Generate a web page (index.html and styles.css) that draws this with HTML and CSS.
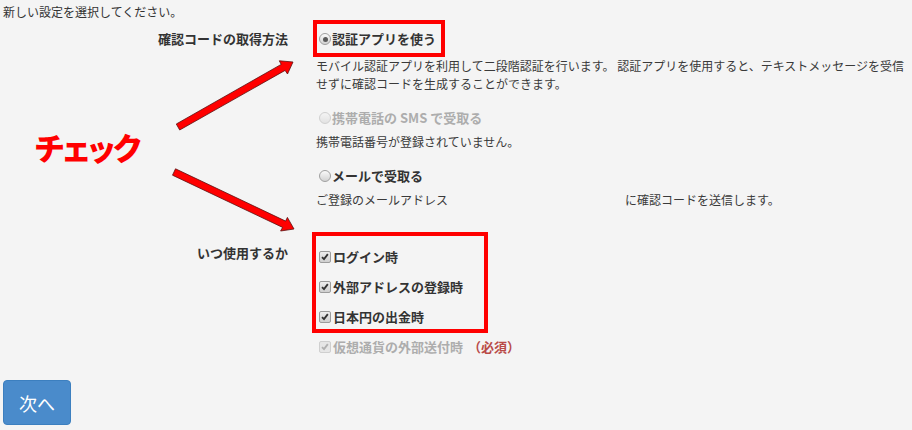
FILE: index.html
```html
<!DOCTYPE html>
<html lang="ja">
<head>
    <meta charset="UTF-8">
    <meta name="viewport" content="width=device-width, initial-scale=1.0">
    <title>二段階認証の設定</title>
    <link rel="stylesheet" href="styles.css">
</head>
<body>
    <div class="page">
        <p class="lead">新しい設定を選択してください。</p>

        <div class="form-row">
            <div class="row-label">確認コードの取得方法</div>
            <div class="row-field">
                <label class="option"><span class="radio on"></span>認証アプリを使う</label>
                <p class="help first">モバイル認証アプリを利用して二段階認証を行います。 認証アプリを使用すると、テキストメッセージを受信せずに確認コードを生成することができます。</p>

                <label class="option disabled"><span class="radio"></span>携帯電話の SMS で受取る</label>
                <p class="help">携帯電話番号が登録されていません。</p>

                <label class="option"><span class="radio"></span>メールで受取る</label>
                <p class="help">ご登録のメールアドレス<span class="addr"></span>に確認コードを送信します。</p>
            </div>
        </div>

        <div class="form-row when">
            <div class="row-label">いつ使用するか</div>
            <div class="row-field checks">
                <label class="option"><span class="check"><svg viewBox="0 0 12 12"><path d="M2.4 6.2 L4.8 8.6 L9.4 2.6"/></svg></span>ログイン時</label>
                <label class="option"><span class="check"><svg viewBox="0 0 12 12"><path d="M2.4 6.2 L4.8 8.6 L9.4 2.6"/></svg></span>外部アドレスの登録時</label>
                <label class="option"><span class="check"><svg viewBox="0 0 12 12"><path d="M2.4 6.2 L4.8 8.6 L9.4 2.6"/></svg></span>日本円の出金時</label>
                <label class="option disabled"><span class="check"><svg viewBox="0 0 12 12"><path d="M2.4 6.2 L4.8 8.6 L9.4 2.6"/></svg></span>仮想通貨の外部送付時<span class="required">（必須）</span></label>
            </div>
        </div>

        <button class="btn-next" type="button">次へ</button>

        <!-- annotation layer -->
        <div class="mark-box box-method"></div>
        <div class="mark-box box-when"></div>
        <div class="mark-text">チェック</div>
        <svg class="mark-arrows" viewBox="0 0 912 430" width="912" height="430">
            <polygon points="176.3,124 281.2,64.4 279.3,60.8 293,62 287.5,74 285.1,70.4 179.7,130"/>
            <polygon points="175.5,168.8 285.6,221.1 287.4,217.4 294,229 280.6,231 282.6,227.4 172.5,175.2"/>
        </svg>
    </div>
</body>
</html>
```

FILE: styles.css
```css
html, body { margin: 0; padding: 0; overflow: hidden; }
body { background-color: #f4f4f4; color: #333; font-family: "Noto Sans CJK JP", "Noto Sans", sans-serif; font-size: 12px; }
.page { position: relative; width: 912px; height: 430px; padding: 3px 0 0 3px; box-sizing: border-box; }
.lead { margin: 0; line-height: 18px; }

.form-row { display: grid; grid-template-columns: 285px 1fr; column-gap: 28px; margin-top: 8px; }
.row-label { font-size: 13px; font-weight: bold; text-align: right; line-height: 20px; }
.row-field { display: flex; flex-direction: column; align-items: flex-start; }

.option { display: inline-flex; align-items: center; font-size: 13px; font-weight: bold; line-height: 20px; white-space: nowrap; }
.option.disabled { color: #adadad; }
.help { margin: 5px 0 15px; line-height: 18px; color: #3a3a3a; }
.help.first { margin-top: 8px; }
.help:last-child { margin-bottom: 0; }
.addr { display: inline-block; width: 177px; }

.radio { width: 12px; height: 12px; margin: 0 1px 0 3px; border: 1px solid #a0a0a0; border-radius: 50%; box-sizing: border-box; background: linear-gradient(#fafafa, #d2d2d2); position: relative; }
.radio.on::after { content: ""; position: absolute; left: 2.5px; top: 2.5px; width: 5px; height: 5px; border-radius: 50%; background: #5a5a5a; }
.option.disabled .radio { border-color: #d0d0d0; background: linear-gradient(#f4f4f4, #e2e2e2); }

.when { margin-top: 34px; }
.checks { padding-top: 4px; gap: 10px; }
.check { width: 12px; height: 12px; margin: 0 2px 0 3px; border: 1px solid #9c9c9c; border-radius: 2px; box-sizing: border-box; background: linear-gradient(#eeeeee, #cfcfcf); display: flex; }
.check svg { width: 10px; height: 10px; fill: none; stroke: #333; stroke-width: 2.2; }
.option.disabled .check { border-color: #cfcfcf; background: #e6e6e6; }
.option.disabled .check svg { stroke: #b0b0b0; }
.required { color: #b94a48; margin-left: 5px; }

.btn-next { display: block; margin-top: 23px; width: 68px; height: 45px; padding: 0; border: 1px solid #3c7fbf; border-radius: 4px; background-color: #4a8bcb; color: #fff; font-family: inherit; font-size: 18px; }

.mark-box { position: absolute; border: 4px solid #f00; box-sizing: border-box; }
.box-method { left: 313px; top: 20px; width: 132px; height: 37px; }
.box-when { left: 312px; top: 232px; width: 176px; height: 101px; }
.mark-text { position: absolute; left: 35px; top: 131px; color: #f00; font-size: 31px; font-weight: 900; line-height: 1; letter-spacing: -1.5px; font-feature-settings: "palt"; }
.mark-arrows { position: absolute; left: 0; top: 0; pointer-events: none; }
.mark-arrows polygon { fill: #f00; stroke: #5a1010; stroke-width: 0.8; }
```
